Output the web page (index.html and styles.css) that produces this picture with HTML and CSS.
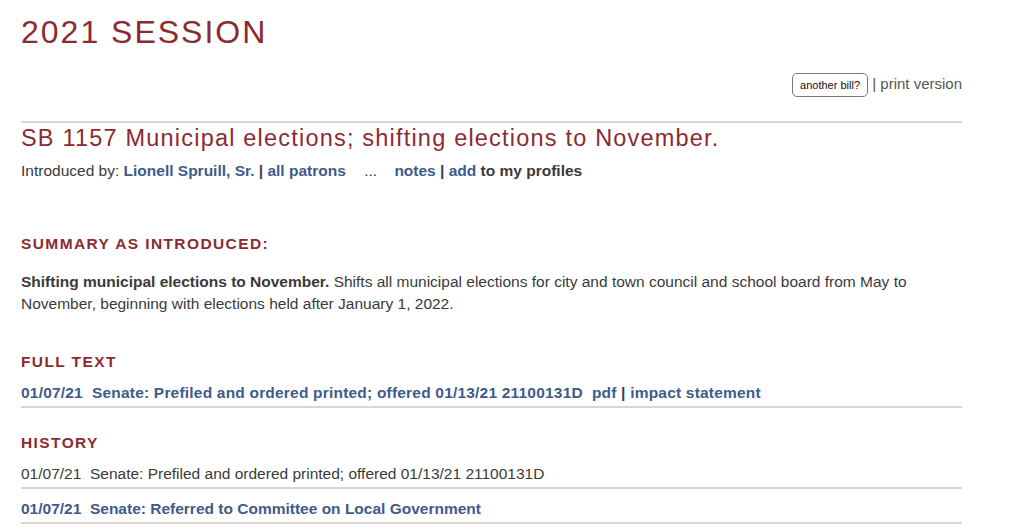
FILE: index.html
```html
<!DOCTYPE html>
<html lang="en">
<head>
  <meta charset="UTF-8" />
  <title>SB 1157 - 2021 Session</title>
  <link rel="stylesheet" href="styles.css">
</head>
<body>
  <div class="container">
    <h1 class="session">2021 SESSION</h1>

    <div class="tools">
      <button class="bill-button">another bill?</button>
      <span class="sep">|</span> <a href="#" class="plain">print version</a>
    </div>

    <div class="bill-head">
      <h2>SB 1157 Municipal elections; shifting elections to November.</h2>
      <p class="patrons">
        Introduced by: <a href="#">Lionell Spruill, Sr.</a> <b class="bar">|</b> <a href="#">all patrons</a>
        <span class="dots">...</span>
        <a href="#">notes</a> <b class="bar">|</b> <a href="#">add</a> <b>to my profiles</b>
      </p>
    </div>

    <h4 class="first">SUMMARY AS INTRODUCED:</h4>
    <p class="summary"><b>Shifting municipal elections to November.</b> Shifts all municipal elections for city and town council and school board from May to November, beginning with elections held after January 1, 2022.</p>

    <h4 class="fulltext">FULL TEXT</h4>
    <ul class="linklist wide">
      <li><a href="#">01/07/21&nbsp; Senate: Prefiled and ordered printed; offered 01/13/21 21100131D</a>&nbsp; <a href="#">pdf</a> <b class="bar">|</b> <a href="#">impact statement</a></li>
    </ul>

    <h4 class="history">HISTORY</h4>
    <ul class="linklist">
      <li>01/07/21&nbsp; Senate: Prefiled and ordered printed; offered 01/13/21 21100131D</li>
      <li><a href="#">01/07/21&nbsp; Senate: Referred to Committee on Local Government</a></li>
    </ul>
  </div>
</body>
</html>
```

FILE: styles.css
```css
body {
    font-family: 'Liberation Sans', Arial, sans-serif;
    margin: 0;
    background-color: #ffffff;
    color: #3a3a3a;
    font-size: 15.5px;
}
.container {
    width: 941px;
    margin: 0 0 0 21px;
}
a {
    color: #3e5b8c;
    font-weight: bold;
    text-decoration: none;
}
a.plain {
    color: #555;
    font-weight: normal;
}
.bar {
    color: #2f3f5c;
}
.session {
    color: #8b2b30;
    font-weight: normal;
    font-size: 32px;
    letter-spacing: 2px;
    margin: 0;
    padding-top: 14px;
    line-height: 36px;
}
.tools {
    text-align: right;
    margin-top: 21px;
    font-size: 15px;
    color: #555;
    line-height: 26px;
}
.bill-button {
    font-family: 'Liberation Sans', Arial, sans-serif;
    font-size: 11px;
    color: #111;
    background: #fff;
    border: 1px solid #777;
    border-radius: 5px;
    height: 24px;
    width: 76px;
    padding: 0 4px;
    vertical-align: middle;
}
.bill-head {
    border-top: 2px solid #d8d6cf;
    margin-top: 24px;
}
h2 {
    color: #8b2b30;
    font-weight: normal;
    font-size: 23.5px;
    letter-spacing: 1.2px;
    margin: 0;
    line-height: 30px;
}
.patrons {
    margin: 8px 0 0;
    line-height: 20px;
}
.dots {
    margin: 0 13px 0 14px;
}
h4 {
    color: #8b2b30;
    font-size: 15.5px;
    letter-spacing: 1.4px;
    margin: 0;
    line-height: 20px;
}
h4.first {
    margin-top: 53px;
}
h4.fulltext {
    margin-top: 37px;
}
h4.history {
    margin-top: 25px;
}
.summary {
    margin: 17px 0 0;
    line-height: 22px;
}
.linklist {
    list-style: none;
    margin: 1px 0 0;
    padding: 0;
}
.linklist li {
    border-bottom: 2px solid #d8d6cf;
    padding: 10px 0 3px;
    line-height: 20px;
}
.linklist.wide li {
    letter-spacing: 0.2px;
}
```
